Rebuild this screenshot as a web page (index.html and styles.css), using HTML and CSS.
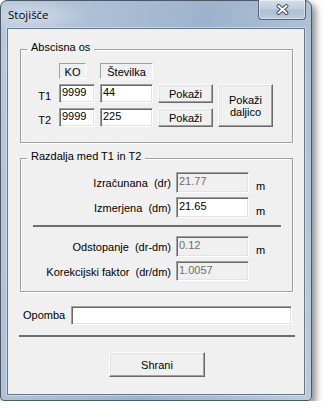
FILE: index.html
```html
<!DOCTYPE html>
<html lang="sl">
<head>
<meta charset="utf-8">
<title>Stojišče</title>
<link rel="stylesheet" href="styles.css">
</head>
<body>
<div class="window">
  <div class="titlebar">
    <span class="title">Stojišče</span>
    <div class="close">
      <svg width="13" height="11" viewBox="0 0 13 11">
        <path d="M2.5 2 L10.5 9 M10.5 2 L2.5 9" stroke="#3d4756" stroke-width="3.8" stroke-linecap="round" fill="none"/>
        <path d="M2.5 2 L10.5 9 M10.5 2 L2.5 9" stroke="#ffffff" stroke-width="2" stroke-linecap="round" fill="none"/>
      </svg>
    </div>
  </div>
  <div class="client">
    <section class="group g1">
      <span class="caption">Abscisna os</span>
      <div class="grid1">
        <span class="hdr ko">KO</span>
        <span class="hdr st">Številka</span>
        <span class="lbl r2">T1</span>
        <input class="field c2 r2" type="text" value="9999">
        <input class="field c3 r2" type="text" value="44">
        <button class="btn c4 r2">Pokaži</button>
        <button class="btn daljico">Pokaži<br>daljico</button>
        <span class="lbl r3">T2</span>
        <input class="field c2 r3" type="text" value="9999">
        <input class="field c3 r3" type="text" value="225">
        <button class="btn c4 r3">Pokaži</button>
      </div>
    </section>
    <section class="group g2">
      <span class="caption">Razdalja med T1 in T2</span>
      <div class="row">
        <span class="rlbl">Izračunana  (dr)</span>
        <input class="field" type="text" value="21.77" disabled>
        <span class="unit">m</span>
      </div>
      <div class="row">
        <span class="rlbl">Izmerjena  (dm)</span>
        <input class="field" type="text" value="21.65">
        <span class="unit">m</span>
      </div>
      <div class="sep inner-sep"></div>
      <div class="row">
        <span class="rlbl">Odstopanje  (dr-dm)</span>
        <input class="field" type="text" value="0.12" disabled>
        <span class="unit">m</span>
      </div>
      <div class="row">
        <span class="rlbl">Korekcijski faktor  (dr/dm)</span>
        <input class="field" type="text" value="1.0057" disabled>
      </div>
    </section>
    <div class="note">
      <label class="note-lbl" for="opomba">Opomba</label>
      <input class="field note-in" id="opomba" type="text" value="">
    </div>
    <div class="sep outer-sep"></div>
    <div class="actions">
      <button class="btn save">Shrani</button>
    </div>
  </div>
</div>
</body>
</html>
```
FILE: styles.css
```css
html, body {
  margin: 0;
  padding: 0;
  background: #ffffff;
}

body {
  font-family: "Liberation Sans", Arial, sans-serif;
  font-size: 11px;
  color: #000;
}

.window {
  width: 312px;
  height: 401px;
  box-sizing: border-box;
  border: 1px solid #4a5767;
  border-radius: 7px 7px 4px 4px;
  padding: 0 6px 5px 6px;
  display: flex;
  flex-direction: column;
  background:
    radial-gradient(ellipse 55px 16px at 32px 15px, rgba(255,255,255,0.35), rgba(255,255,255,0) 100%),
    linear-gradient(100deg, #bac9dc 0%, #a8bbd3 35%, #9db2cc 55%, #adbfd5 80%, #bccbdd 100%);
  box-shadow: 4px 4px 7px rgba(0,0,0,0.45);
}

.titlebar {
  height: 27px;
  flex: none;
  display: flex;
  justify-content: space-between;
  align-items: flex-start;
}

.title {
  font-family: "Open Sans", "Noto Sans", sans-serif;
  font-size: 11.5px;
  line-height: 14px;
  padding: 7px 0 0 1px;
  color: #000;
}

.close {
  width: 48px;
  height: 20px;
  box-sizing: border-box;
  margin: -1px -1px 0 0;
  border: 1px solid #56657a;
  border-top: none;
  border-radius: 0 0 4px 4px;
  background: linear-gradient(#d3dde9 0%, #c0cede 45%, #aebfd4 55%, #bccbdd 100%);
  box-shadow: inset 0 0 0 1px rgba(255,255,255,0.45);
  display: flex;
  align-items: center;
  justify-content: center;
}

.client {
  flex: 1;
  background: #f0f0f0;
  border: 1px solid #66768a;
  box-shadow: 0 0 0 1px rgba(255,255,255,0.4);
  display: flex;
  flex-direction: column;
}

.group {
  position: relative;
  width: 273px;
  box-sizing: border-box;
  margin-left: 12px;
  border: 1px solid #a0a0a0;
  box-shadow: inset 1px 1px 0 #fff, 1px 1px 0 #fff;
  flex: none;
}

.g1 {
  margin-top: 20px;
  height: 94px;
  padding-top: 13px;
}

.g2 {
  margin-top: 15px;
  height: 134px;
  padding-top: 13px;
}

.caption {
  position: absolute;
  top: -9px;
  left: 6px;
  padding: 0 4px;
  background: #f0f0f0;
  line-height: 13px;
  white-space: nowrap;
}

.grid1 {
  display: grid;
  grid-template-columns: 33px 36px 53px 55px 55px;
  grid-template-rows: 16px 19px 19px;
  gap: 5px;
}

.hdr {
  box-sizing: border-box;
  height: 16px;
  border: 1px solid;
  border-color: #a0a0a0 #fff #fff #a0a0a0;
  line-height: 12px;
  padding-top: 2px;
  text-align: center;
  grid-row: 1;
}

.ko {
  grid-column: 2;
  width: 27px;
}

.st {
  grid-column: 3;
}

.lbl {
  grid-column: 1;
  align-self: end;
  line-height: 13px;
  text-align: right;
  padding-right: 3px;
}

.r2 { grid-row: 2; }
.r3 { grid-row: 3; }
.c2 { grid-column: 2; }
.c3 { grid-column: 3; }
.c4 { grid-column: 4; }

.field {
  box-sizing: border-box;
  width: 100%;
  height: 100%;
  margin: 0;
  padding: 0 0 3px 2px;
  border: 1px solid;
  border-color: #a0a0a0 #fff #fff #a0a0a0;
  border-radius: 0;
  box-shadow: inset 1px 1px 0 #696969, inset -1px -1px 0 #e3e3e3;
  background: #fff;
  font-family: "Liberation Sans", Arial, sans-serif;
  font-size: 11px;
  color: #000;
  outline: none;
}

.field:disabled {
  background: #f0f0f0;
  color: #6d6d6d;
  -webkit-text-fill-color: #6d6d6d;
  opacity: 1;
}

.btn {
  box-sizing: border-box;
  margin: 0;
  padding: 0;
  font-family: "Liberation Sans", Arial, sans-serif;
  font-size: 11px;
  line-height: 12px;
  color: #000;
  background: #f0f0f0;
  border: 1px solid;
  border-color: #fff #696969 #696969 #fff;
  border-radius: 0;
  box-shadow: inset -1px -1px 0 #a0a0a0, inset 1px 1px 0 #e3e3e3;
}

.daljico {
  grid-column: 5;
  grid-row: 2 / 4;
}

.row {
  display: grid;
  grid-template-columns: 150px 73px auto;
  column-gap: 5px;
  height: 20px;
}

.row + .row {
  margin-top: 5px;
}

.rlbl {
  white-space: pre;
  text-align: right;
  line-height: 13px;
  padding-top: 5px;
}

.unit {
  line-height: 13px;
  padding-top: 8px;
  margin-left: 2px;
}

.sep {
  height: 2px;
  background: #6e6e6e;
  flex: none;
}

.inner-sep {
  width: 248px;
  margin: 8px 0 9px 12px;
}

.note {
  display: flex;
  align-items: center;
  margin: 14px 0 0 15px;
  height: 19px;
  flex: none;
}

.note-lbl {
  width: 48px;
  line-height: 13px;
  flex: none;
}

.note-in {
  width: 221px;
  flex: none;
}

.outer-sep {
  width: 276px;
  margin: 10px 0 0 11px;
}

.actions {
  margin: 15px 0 0 101px;
}

.save {
  width: 96px;
  height: 25px;
}
```
